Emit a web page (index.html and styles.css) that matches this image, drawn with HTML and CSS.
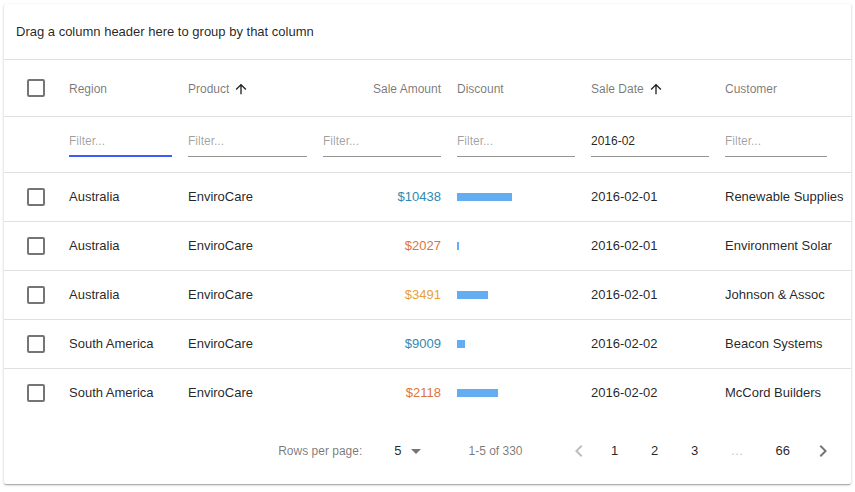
FILE: index.html
```html
<!DOCTYPE html>
<html lang="en">
<head>
<meta charset="utf-8">
<title>Sales grid</title>
<link rel="stylesheet" href="styles.css">
</head>
<body>
<div class="card">
  <div class="group-panel">Drag a column header here to group by that column</div>
  <div class="grid">
    <div class="row head">
      <div class="cell cb-cell"><span class="checkbox"></span></div>
      <div class="cell">Region</div>
      <div class="cell">Product <svg class="sort" viewBox="0 0 24 24"><path d="M4 12l1.41 1.41L11 7.830V20h2V7.83l5.58 5.59L20 12l-8-8-8 8z"/></svg></div>
      <div class="cell right">Sale Amount</div>
      <div class="cell">Discount</div>
      <div class="cell">Sale Date <svg class="sort" viewBox="0 0 24 24"><path d="M4 12l1.41 1.41L11 7.83V20h2V7.83l5.58 5.59L20 12l-8-8-8 8z"/></svg></div>
      <div class="cell">Customer</div>
      <div class="cell"></div>
    </div>
    <div class="row filter">
      <div class="cell cb-cell"></div>
      <div class="cell"><input class="fi focused" placeholder="Filter..."></div>
      <div class="cell"><input class="fi" placeholder="Filter..."></div>
      <div class="cell"><input class="fi" placeholder="Filter..."></div>
      <div class="cell"><input class="fi" placeholder="Filter..."></div>
      <div class="cell"><input class="fi" value="2016-02"></div>
      <div class="cell"><input class="fi" placeholder="Filter..."></div>
      <div class="cell"></div>
    </div>
    <div class="row data">
      <div class="cell cb-cell"><span class="checkbox"></span></div>
      <div class="cell txt">Australia</div>
      <div class="cell txt">EnviroCare</div>
      <div class="cell txt right amt-blue">$10438</div>
      <div class="cell"><span class="bar" style="width:55px"></span></div>
      <div class="cell txt">2016-02-01</div>
      <div class="cell txt">Renewable Supplies</div>
      <div class="cell"></div>
    </div>
    <div class="row data">
      <div class="cell cb-cell"><span class="checkbox"></span></div>
      <div class="cell txt">Australia</div>
      <div class="cell txt">EnviroCare</div>
      <div class="cell txt right amt-red">$2027</div>
      <div class="cell"><span class="bar" style="width:2px"></span></div>
      <div class="cell txt">2016-02-01</div>
      <div class="cell txt">Environment Solar</div>
      <div class="cell"></div>
    </div>
    <div class="row data">
      <div class="cell cb-cell"><span class="checkbox"></span></div>
      <div class="cell txt">Australia</div>
      <div class="cell txt">EnviroCare</div>
      <div class="cell txt right amt-yellow">$3491</div>
      <div class="cell"><span class="bar" style="width:31px"></span></div>
      <div class="cell txt">2016-02-01</div>
      <div class="cell txt">Johnson &amp; Assoc</div>
      <div class="cell"></div>
    </div>
    <div class="row data">
      <div class="cell cb-cell"><span class="checkbox"></span></div>
      <div class="cell txt">South America</div>
      <div class="cell txt">EnviroCare</div>
      <div class="cell txt right amt-blue">$9009</div>
      <div class="cell"><span class="bar" style="width:8px"></span></div>
      <div class="cell txt">2016-02-02</div>
      <div class="cell txt">Beacon Systems</div>
      <div class="cell"></div>
    </div>
    <div class="row data last">
      <div class="cell cb-cell"><span class="checkbox"></span></div>
      <div class="cell txt">South America</div>
      <div class="cell txt">EnviroCare</div>
      <div class="cell txt right amt-red">$2118</div>
      <div class="cell"><span class="bar" style="width:41px"></span></div>
      <div class="cell txt">2016-02-02</div>
      <div class="cell txt">McCord Builders</div>
      <div class="cell"></div>
    </div>
  </div>
  <div class="pager">
    <span class="muted">Rows per page:</span>
    <span class="select">5<svg class="caret" viewBox="0 0 24 24"><path d="M7 10l5 5 5-5z"/></svg></span>
    <span class="muted range">1-5 of 330</span>
    <span class="nav prev"><svg viewBox="0 0 24 24"><path d="M15.41 7.41L14 6l-6 6 6 6 1.41-1.41L10.83 12z"/></svg></span>
    <span class="page">1</span>
    <span class="page">2</span>
    <span class="page">3</span>
    <span class="page ellipsis">…</span>
    <span class="page">66</span>
    <span class="nav next"><svg viewBox="0 0 24 24"><path d="M10 6L8.59 7.41 13.17 12l-4.58 4.59L10 18l6-6z"/></svg></span>
  </div>
</div>
</body>
</html>
```

FILE: styles.css
```css
* { box-sizing: border-box; }
html, body { margin: 0; padding: 0; background: #fff; }
body {
  font-family: "Liberation Sans", Arial, sans-serif;
  font-size: 13px;
  color: rgba(0,0,0,0.87);
}
.card {
  margin: 4px;
  width: 847px;
  height: 480px;
  background: #fff;
  border-radius: 2px;
  box-shadow: 0 1px 3px rgba(0,0,0,0.2), 0 1px 1px rgba(0,0,0,0.14), 0 2px 1px -1px rgba(0,0,0,0.12);
  overflow: hidden;
}
.group-panel {
  height: 56px;
  padding-left: 12px;
  display: flex;
  align-items: center;
  border-bottom: 1px solid #e0e0e0;
  color: rgba(0,0,0,0.87);
  font-size: 13px;
}
.row {
  display: grid;
  grid-template-columns: 57px 119px 135px 134px 134px 134px 118px 16px;
  border-bottom: 1px solid #e0e0e0;
  align-items: center;
}
.row.head { height: 57px; font-size: 12px; color: rgba(0,0,0,0.54); }
.row.head .cell { padding-top: 1px; }
.row.head .cb-cell { padding-top: 0; }
.row.filter { height: 56px; }
.row.data { height: 49px; }
.row.data.last { height: 48px; border-bottom: none; }
.cell {
  padding: 0 8px;
  white-space: nowrap;
  display: flex;
  align-items: center;
  min-width: 0;
}
.cell.txt { padding-bottom: 1px; }
.cell.right { justify-content: flex-end; }
.cb-cell { padding: 0 0 0 23px; }
.checkbox {
  display: block;
  width: 18px;
  height: 18px;
  border: 2px solid #757575;
  border-radius: 2px;
}
.sort {
  width: 16px;
  height: 16px;
  margin-left: 4px;
  fill: rgba(0,0,0,0.87);
}
.fi {
  width: 100%;
  border: none;
  border-bottom: 1px solid rgba(0,0,0,0.42);
  outline: none;
  padding: 0 0 7px 0;
  margin: 1px 0 0 0;
  height: 24px;
  line-height: 16px;
  font-family: "Liberation Sans", Arial, sans-serif;
  font-size: 12px;
  color: rgba(0,0,0,0.87);
  background: transparent;
}
.fi::placeholder { color: rgba(0,0,0,0.38); opacity: 1; }
.fi.focused { border-bottom: 2px solid #3d5afe; padding-bottom: 6px; }
.amt-blue { color: #2f8ab0; }
.amt-red { color: #e0743a; }
.amt-yellow { color: #e69f35; }
.bar {
  display: block;
  height: 8px;
  background: #64adf2;
}
.pager {
  height: 67px;
  display: flex;
  align-items: center;
  justify-content: flex-end;
  padding-right: 11px;
  font-size: 13px;
}
.muted { color: rgba(0,0,0,0.54); font-size: 12px; }
.select {
  display: flex;
  align-items: center;
  margin-left: 32px;
  color: rgba(0,0,0,0.87);
}
.caret { width: 24px; height: 24px; margin-left: 3px; fill: rgba(0,0,0,0.54); }
.range { margin-left: 40px; }
.nav { display: flex; align-items: center; justify-content: center; height: 32px; }
.nav svg { width: 24px; height: 24px; }
.prev { width: 32px; margin-left: 40px; }
.prev svg { fill: rgba(0,0,0,0.26); }
.next { width: 34px; }
.next svg { fill: rgba(0,0,0,0.54); }
.page {
  height: 32px;
  min-width: 40px;
  display: flex;
  align-items: center;
  justify-content: center;
  padding: 0 16px;
  color: rgba(0,0,0,0.87);
}
.page.ellipsis { color: rgba(0,0,0,0.26); width: 45px; min-width: 45px; padding: 0; }
```
